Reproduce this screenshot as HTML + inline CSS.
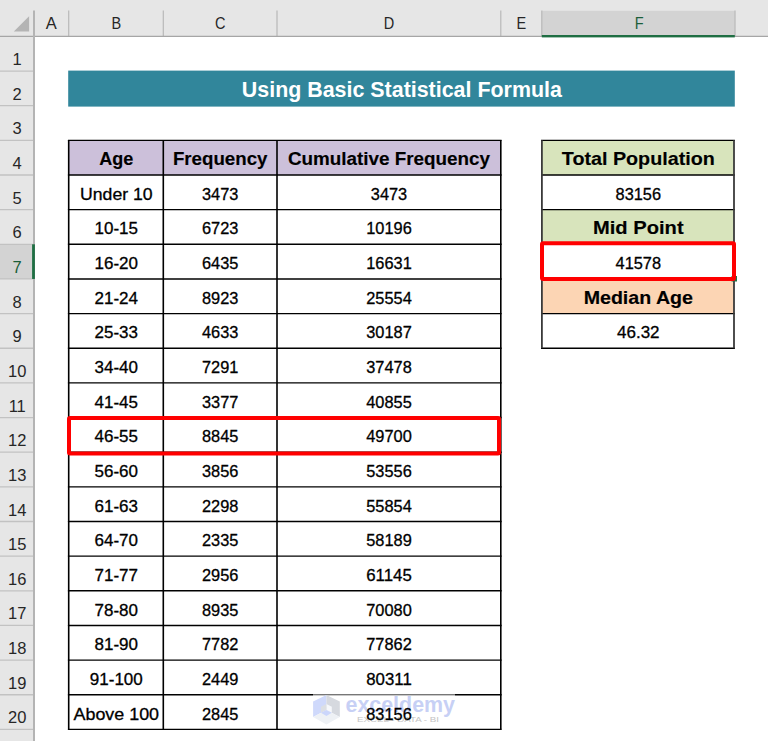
<!DOCTYPE html>
<html><head><meta charset="utf-8"><style>
html,body{margin:0;padding:0;background:#fff;width:768px;height:741px;overflow:hidden}
svg{display:block;font-family:"Liberation Sans", sans-serif}
</style></head><body>
<svg width="768" height="741" viewBox="0 0 768 741">
<rect x="0" y="0" width="768" height="741" fill="#ffffff"/>
<rect x="0" y="0" width="768" height="36.4" fill="#e6e6e6"/>
<rect x="0" y="36.4" width="34" height="704.6" fill="#e6e6e6"/>
<rect x="541.8" y="10.8" width="193.0" height="25.599999999999998" fill="#d3d3d3"/>
<rect x="0" y="244.29999999999998" width="33" height="34.65" fill="#d3d3d3"/>
<line x1="68.7" y1="10.5" x2="68.7" y2="36.4" stroke="#b8b8b8" stroke-width="1.2"/>
<line x1="163.3" y1="10.5" x2="163.3" y2="36.4" stroke="#b8b8b8" stroke-width="1.2"/>
<line x1="277.0" y1="10.5" x2="277.0" y2="36.4" stroke="#b8b8b8" stroke-width="1.2"/>
<line x1="500.8" y1="10.5" x2="500.8" y2="36.4" stroke="#b8b8b8" stroke-width="1.2"/>
<line x1="541.8" y1="10.5" x2="541.8" y2="36.4" stroke="#b8b8b8" stroke-width="1.2"/>
<line x1="735.0" y1="10.5" x2="735.0" y2="36.4" stroke="#b8b8b8" stroke-width="1.2"/>
<line x1="0" y1="71.05" x2="33" y2="71.05" stroke="#c2c2c2" stroke-width="1.3"/>
<line x1="0" y1="105.70" x2="33" y2="105.70" stroke="#c2c2c2" stroke-width="1.3"/>
<line x1="0" y1="140.35" x2="33" y2="140.35" stroke="#c2c2c2" stroke-width="1.3"/>
<line x1="0" y1="175.00" x2="33" y2="175.00" stroke="#c2c2c2" stroke-width="1.3"/>
<line x1="0" y1="209.65" x2="33" y2="209.65" stroke="#c2c2c2" stroke-width="1.3"/>
<line x1="0" y1="244.30" x2="33" y2="244.30" stroke="#c2c2c2" stroke-width="1.3"/>
<line x1="0" y1="278.95" x2="33" y2="278.95" stroke="#c2c2c2" stroke-width="1.3"/>
<line x1="0" y1="313.60" x2="33" y2="313.60" stroke="#c2c2c2" stroke-width="1.3"/>
<line x1="0" y1="348.25" x2="33" y2="348.25" stroke="#c2c2c2" stroke-width="1.3"/>
<line x1="0" y1="382.90" x2="33" y2="382.90" stroke="#c2c2c2" stroke-width="1.3"/>
<line x1="0" y1="417.55" x2="33" y2="417.55" stroke="#c2c2c2" stroke-width="1.3"/>
<line x1="0" y1="452.20" x2="33" y2="452.20" stroke="#c2c2c2" stroke-width="1.3"/>
<line x1="0" y1="486.85" x2="33" y2="486.85" stroke="#c2c2c2" stroke-width="1.3"/>
<line x1="0" y1="521.50" x2="33" y2="521.50" stroke="#c2c2c2" stroke-width="1.3"/>
<line x1="0" y1="556.15" x2="33" y2="556.15" stroke="#c2c2c2" stroke-width="1.3"/>
<line x1="0" y1="590.80" x2="33" y2="590.80" stroke="#c2c2c2" stroke-width="1.3"/>
<line x1="0" y1="625.45" x2="33" y2="625.45" stroke="#c2c2c2" stroke-width="1.3"/>
<line x1="0" y1="660.10" x2="33" y2="660.10" stroke="#c2c2c2" stroke-width="1.3"/>
<line x1="0" y1="694.75" x2="33" y2="694.75" stroke="#c2c2c2" stroke-width="1.3"/>
<line x1="0" y1="729.40" x2="33" y2="729.40" stroke="#c2c2c2" stroke-width="1.3"/>
<line x1="0" y1="36.4" x2="768" y2="36.4" stroke="#a6a6a6" stroke-width="1.4"/>
<line x1="34" y1="10.5" x2="34" y2="741" stroke="#b4b4b4" stroke-width="2"/>
<rect x="541.8" y="35" width="193.0" height="2.4" fill="#1f6e43"/>
<rect x="32.1" y="244.30" width="2.8" height="34.65" fill="#1f6e43"/>
<polygon points="13.8,31.6 29.1,16.2 29.1,31.6" fill="#b4b4b4"/>
<rect x="68.2" y="70.6" width="666.5999999999999" height="36" fill="#31869b"/>
<rect x="68.7" y="140.35" width="432.1" height="34.65" fill="#ccc0da"/>
<rect x="541.9" y="140.35" width="192.10000000000002" height="34.65" fill="#d8e4bc"/>
<rect x="541.9" y="209.65" width="192.10000000000002" height="34.65" fill="#d8e4bc"/>
<rect x="541.9" y="278.95" width="192.10000000000002" height="34.65" fill="#fcd5b4"/>
<line x1="67.9" y1="140.35" x2="501.6" y2="140.35" stroke="#000" stroke-width="1.4"/>
<line x1="67.9" y1="175.00" x2="501.6" y2="175.00" stroke="#000" stroke-width="1.4"/>
<line x1="67.9" y1="209.65" x2="501.6" y2="209.65" stroke="#000" stroke-width="1.4"/>
<line x1="67.9" y1="244.30" x2="501.6" y2="244.30" stroke="#000" stroke-width="1.4"/>
<line x1="67.9" y1="278.95" x2="501.6" y2="278.95" stroke="#000" stroke-width="1.4"/>
<line x1="67.9" y1="313.60" x2="501.6" y2="313.60" stroke="#000" stroke-width="1.4"/>
<line x1="67.9" y1="348.25" x2="501.6" y2="348.25" stroke="#000" stroke-width="1.4"/>
<line x1="67.9" y1="382.90" x2="501.6" y2="382.90" stroke="#000" stroke-width="1.4"/>
<line x1="67.9" y1="417.55" x2="501.6" y2="417.55" stroke="#000" stroke-width="1.4"/>
<line x1="67.9" y1="452.20" x2="501.6" y2="452.20" stroke="#000" stroke-width="1.4"/>
<line x1="67.9" y1="486.85" x2="501.6" y2="486.85" stroke="#000" stroke-width="1.4"/>
<line x1="67.9" y1="521.50" x2="501.6" y2="521.50" stroke="#000" stroke-width="1.4"/>
<line x1="67.9" y1="556.15" x2="501.6" y2="556.15" stroke="#000" stroke-width="1.4"/>
<line x1="67.9" y1="590.80" x2="501.6" y2="590.80" stroke="#000" stroke-width="1.4"/>
<line x1="67.9" y1="625.45" x2="501.6" y2="625.45" stroke="#000" stroke-width="1.4"/>
<line x1="67.9" y1="660.10" x2="501.6" y2="660.10" stroke="#000" stroke-width="1.4"/>
<line x1="67.9" y1="694.75" x2="501.6" y2="694.75" stroke="#000" stroke-width="1.4"/>
<line x1="67.9" y1="729.40" x2="501.6" y2="729.40" stroke="#000" stroke-width="1.4"/>
<line x1="68.7" y1="140.35" x2="68.7" y2="729.40" stroke="#000" stroke-width="1.6"/>
<line x1="163.3" y1="140.35" x2="163.3" y2="729.40" stroke="#000" stroke-width="1.6"/>
<line x1="277.0" y1="140.35" x2="277.0" y2="729.40" stroke="#000" stroke-width="1.6"/>
<line x1="500.8" y1="140.35" x2="500.8" y2="729.40" stroke="#000" stroke-width="1.6"/>
<line x1="541" y1="140.35" x2="734.9" y2="140.35" stroke="#000" stroke-width="1.4"/>
<line x1="541" y1="175.00" x2="734.9" y2="175.00" stroke="#000" stroke-width="1.4"/>
<line x1="541" y1="209.65" x2="734.9" y2="209.65" stroke="#000" stroke-width="1.4"/>
<line x1="541" y1="244.30" x2="734.9" y2="244.30" stroke="#000" stroke-width="1.4"/>
<line x1="541" y1="278.95" x2="734.9" y2="278.95" stroke="#000" stroke-width="1.4"/>
<line x1="541" y1="313.60" x2="734.9" y2="313.60" stroke="#000" stroke-width="1.4"/>
<line x1="541" y1="348.25" x2="734.9" y2="348.25" stroke="#000" stroke-width="1.4"/>
<line x1="541.9" y1="140.35" x2="541.9" y2="348.25" stroke="#3a3a3a" stroke-width="1.8"/>
<line x1="734.0" y1="140.35" x2="734.0" y2="348.25" stroke="#3a3a3a" stroke-width="1.8"/>
<rect x="69" y="418" width="430" height="35.6" fill="none" stroke="#ff0000" stroke-width="4" rx="1"/>
<rect x="731.5" y="276" width="5.5" height="5.5" fill="#217346"/>
<rect x="542" y="243.3" width="192" height="35.7" fill="none" stroke="#ff0000" stroke-width="4" rx="1"/>
<rect x="313" y="694.2" width="142" height="31.6" fill="#ffffff" fill-opacity="0.58"/>
<polygon points="326.4,694.9 313.1,701.6 313.1,717 326.4,710" fill="#cfd9fb"/>
<polygon points="326.4,694.9 339.8,701.6 339.8,717 326.4,710" fill="#d6d9df"/>
<polygon points="313.1,717 326.4,710 339.8,717 326.4,724.5" fill="#eef1f5"/>
<polygon points="326.4,704 331.8,706.7 331.8,712.7 326.4,710" fill="#f6f8fb"/>
<polygon points="326.4,704 321,706.7 321,712.7 326.4,710" fill="#dcdfe4"/>
<polygon points="321,712.7 326.4,710 331.8,712.7 326.4,716" fill="#cbd6fb"/>
<text x="345.5" y="711.9" font-size="22" font-weight="bold" fill="#c7d0f5" textLength="109.5" lengthAdjust="spacingAndGlyphs">exceldemy</text>
<text x="357" y="722" font-size="7.5" fill="#c4c4c4" textLength="82" lengthAdjust="spacingAndGlyphs">EXCEL  -  DATA  -  BI</text>
<text x="51.35" y="28.6" font-size="16.5" fill="#262626" text-anchor="middle">A</text>
<text x="116.30" y="28.6" font-size="16.5" fill="#262626" text-anchor="middle" textLength="9.7" lengthAdjust="spacingAndGlyphs">B</text>
<text x="220.20" y="28.6" font-size="16.5" fill="#262626" text-anchor="middle" textLength="10.5" lengthAdjust="spacingAndGlyphs">C</text>
<text x="389.00" y="28.6" font-size="16.5" fill="#262626" text-anchor="middle" textLength="10.5" lengthAdjust="spacingAndGlyphs">D</text>
<text x="521.30" y="28.6" font-size="16.5" fill="#262626" text-anchor="middle" textLength="9.7" lengthAdjust="spacingAndGlyphs">E</text>
<text x="639.10" y="28.6" font-size="16.5" fill="#1b5e39" text-anchor="middle" textLength="8.9" lengthAdjust="spacingAndGlyphs">F</text>
<text x="17.2" y="65.05" font-size="16.5" fill="#262626" text-anchor="middle">1</text>
<text x="17.2" y="99.70" font-size="16.5" fill="#262626" text-anchor="middle">2</text>
<text x="17.2" y="134.35" font-size="16.5" fill="#262626" text-anchor="middle">3</text>
<text x="17.2" y="169.00" font-size="16.5" fill="#262626" text-anchor="middle">4</text>
<text x="17.2" y="203.65" font-size="16.5" fill="#262626" text-anchor="middle">5</text>
<text x="17.2" y="238.30" font-size="16.5" fill="#262626" text-anchor="middle">6</text>
<text x="17.2" y="272.95" font-size="16.5" fill="#1b5e39" text-anchor="middle">7</text>
<text x="17.2" y="307.60" font-size="16.5" fill="#262626" text-anchor="middle">8</text>
<text x="17.2" y="342.25" font-size="16.5" fill="#262626" text-anchor="middle">9</text>
<text x="17.2" y="376.90" font-size="16.5" fill="#262626" text-anchor="middle">10</text>
<text x="17.2" y="411.55" font-size="16.5" fill="#262626" text-anchor="middle">11</text>
<text x="17.2" y="446.20" font-size="16.5" fill="#262626" text-anchor="middle">12</text>
<text x="17.2" y="480.85" font-size="16.5" fill="#262626" text-anchor="middle">13</text>
<text x="17.2" y="515.50" font-size="16.5" fill="#262626" text-anchor="middle">14</text>
<text x="17.2" y="550.15" font-size="16.5" fill="#262626" text-anchor="middle">15</text>
<text x="17.2" y="584.80" font-size="16.5" fill="#262626" text-anchor="middle">16</text>
<text x="17.2" y="619.45" font-size="16.5" fill="#262626" text-anchor="middle">17</text>
<text x="17.2" y="654.10" font-size="16.5" fill="#262626" text-anchor="middle">18</text>
<text x="17.2" y="688.75" font-size="16.5" fill="#262626" text-anchor="middle">19</text>
<text x="17.2" y="723.40" font-size="16.5" fill="#262626" text-anchor="middle">20</text>
<text x="401.85" y="96.6" font-size="22" font-weight="bold" fill="#ffffff" text-anchor="middle" textLength="320" lengthAdjust="spacingAndGlyphs">Using Basic Statistical Formula</text>
<text x="116.30" y="165.00" font-size="19" font-weight="bold" stroke="#000" stroke-width="0.15" fill="#000" text-anchor="middle" textLength="34" lengthAdjust="spacingAndGlyphs">Age</text>
<text x="220.20" y="165.00" font-size="19" font-weight="bold" stroke="#000" stroke-width="0.15" fill="#000" text-anchor="middle" textLength="94.5" lengthAdjust="spacingAndGlyphs">Frequency</text>
<text x="389.00" y="165.00" font-size="19" font-weight="bold" stroke="#000" stroke-width="0.15" fill="#000" text-anchor="middle" textLength="202" lengthAdjust="spacingAndGlyphs">Cumulative Frequency</text>
<text x="116.30" y="199.75" font-size="17" stroke="#000" stroke-width="0.3" fill="#000" text-anchor="middle" textLength="72.5" lengthAdjust="spacingAndGlyphs">Under 10</text>
<text x="220.20" y="199.75" font-size="17" stroke="#000" stroke-width="0.3" fill="#000" text-anchor="middle" textLength="36.4" lengthAdjust="spacingAndGlyphs">3473</text>
<text x="389.00" y="199.75" font-size="17" stroke="#000" stroke-width="0.3" fill="#000" text-anchor="middle" textLength="36.4" lengthAdjust="spacingAndGlyphs">3473</text>
<text x="116.30" y="234.40" font-size="17" stroke="#000" stroke-width="0.3" fill="#000" text-anchor="middle">10-15</text>
<text x="220.20" y="234.40" font-size="17" stroke="#000" stroke-width="0.3" fill="#000" text-anchor="middle" textLength="36.4" lengthAdjust="spacingAndGlyphs">6723</text>
<text x="389.00" y="234.40" font-size="17" stroke="#000" stroke-width="0.3" fill="#000" text-anchor="middle" textLength="45.5" lengthAdjust="spacingAndGlyphs">10196</text>
<text x="116.30" y="269.05" font-size="17" stroke="#000" stroke-width="0.3" fill="#000" text-anchor="middle">16-20</text>
<text x="220.20" y="269.05" font-size="17" stroke="#000" stroke-width="0.3" fill="#000" text-anchor="middle" textLength="36.4" lengthAdjust="spacingAndGlyphs">6435</text>
<text x="389.00" y="269.05" font-size="17" stroke="#000" stroke-width="0.3" fill="#000" text-anchor="middle" textLength="45.5" lengthAdjust="spacingAndGlyphs">16631</text>
<text x="116.30" y="303.70" font-size="17" stroke="#000" stroke-width="0.3" fill="#000" text-anchor="middle">21-24</text>
<text x="220.20" y="303.70" font-size="17" stroke="#000" stroke-width="0.3" fill="#000" text-anchor="middle" textLength="36.4" lengthAdjust="spacingAndGlyphs">8923</text>
<text x="389.00" y="303.70" font-size="17" stroke="#000" stroke-width="0.3" fill="#000" text-anchor="middle" textLength="45.5" lengthAdjust="spacingAndGlyphs">25554</text>
<text x="116.30" y="338.35" font-size="17" stroke="#000" stroke-width="0.3" fill="#000" text-anchor="middle">25-33</text>
<text x="220.20" y="338.35" font-size="17" stroke="#000" stroke-width="0.3" fill="#000" text-anchor="middle" textLength="36.4" lengthAdjust="spacingAndGlyphs">4633</text>
<text x="389.00" y="338.35" font-size="17" stroke="#000" stroke-width="0.3" fill="#000" text-anchor="middle" textLength="45.5" lengthAdjust="spacingAndGlyphs">30187</text>
<text x="116.30" y="373.00" font-size="17" stroke="#000" stroke-width="0.3" fill="#000" text-anchor="middle">34-40</text>
<text x="220.20" y="373.00" font-size="17" stroke="#000" stroke-width="0.3" fill="#000" text-anchor="middle" textLength="36.4" lengthAdjust="spacingAndGlyphs">7291</text>
<text x="389.00" y="373.00" font-size="17" stroke="#000" stroke-width="0.3" fill="#000" text-anchor="middle" textLength="45.5" lengthAdjust="spacingAndGlyphs">37478</text>
<text x="116.30" y="407.65" font-size="17" stroke="#000" stroke-width="0.3" fill="#000" text-anchor="middle">41-45</text>
<text x="220.20" y="407.65" font-size="17" stroke="#000" stroke-width="0.3" fill="#000" text-anchor="middle" textLength="36.4" lengthAdjust="spacingAndGlyphs">3377</text>
<text x="389.00" y="407.65" font-size="17" stroke="#000" stroke-width="0.3" fill="#000" text-anchor="middle" textLength="45.5" lengthAdjust="spacingAndGlyphs">40855</text>
<text x="116.30" y="442.30" font-size="17" stroke="#000" stroke-width="0.3" fill="#000" text-anchor="middle">46-55</text>
<text x="220.20" y="442.30" font-size="17" stroke="#000" stroke-width="0.3" fill="#000" text-anchor="middle" textLength="36.4" lengthAdjust="spacingAndGlyphs">8845</text>
<text x="389.00" y="442.30" font-size="17" stroke="#000" stroke-width="0.3" fill="#000" text-anchor="middle" textLength="45.5" lengthAdjust="spacingAndGlyphs">49700</text>
<text x="116.30" y="476.95" font-size="17" stroke="#000" stroke-width="0.3" fill="#000" text-anchor="middle">56-60</text>
<text x="220.20" y="476.95" font-size="17" stroke="#000" stroke-width="0.3" fill="#000" text-anchor="middle" textLength="36.4" lengthAdjust="spacingAndGlyphs">3856</text>
<text x="389.00" y="476.95" font-size="17" stroke="#000" stroke-width="0.3" fill="#000" text-anchor="middle" textLength="45.5" lengthAdjust="spacingAndGlyphs">53556</text>
<text x="116.30" y="511.60" font-size="17" stroke="#000" stroke-width="0.3" fill="#000" text-anchor="middle">61-63</text>
<text x="220.20" y="511.60" font-size="17" stroke="#000" stroke-width="0.3" fill="#000" text-anchor="middle" textLength="36.4" lengthAdjust="spacingAndGlyphs">2298</text>
<text x="389.00" y="511.60" font-size="17" stroke="#000" stroke-width="0.3" fill="#000" text-anchor="middle" textLength="45.5" lengthAdjust="spacingAndGlyphs">55854</text>
<text x="116.30" y="546.25" font-size="17" stroke="#000" stroke-width="0.3" fill="#000" text-anchor="middle">64-70</text>
<text x="220.20" y="546.25" font-size="17" stroke="#000" stroke-width="0.3" fill="#000" text-anchor="middle" textLength="36.4" lengthAdjust="spacingAndGlyphs">2335</text>
<text x="389.00" y="546.25" font-size="17" stroke="#000" stroke-width="0.3" fill="#000" text-anchor="middle" textLength="45.5" lengthAdjust="spacingAndGlyphs">58189</text>
<text x="116.30" y="580.90" font-size="17" stroke="#000" stroke-width="0.3" fill="#000" text-anchor="middle">71-77</text>
<text x="220.20" y="580.90" font-size="17" stroke="#000" stroke-width="0.3" fill="#000" text-anchor="middle" textLength="36.4" lengthAdjust="spacingAndGlyphs">2956</text>
<text x="389.00" y="580.90" font-size="17" stroke="#000" stroke-width="0.3" fill="#000" text-anchor="middle" textLength="45.5" lengthAdjust="spacingAndGlyphs">61145</text>
<text x="116.30" y="615.55" font-size="17" stroke="#000" stroke-width="0.3" fill="#000" text-anchor="middle">78-80</text>
<text x="220.20" y="615.55" font-size="17" stroke="#000" stroke-width="0.3" fill="#000" text-anchor="middle" textLength="36.4" lengthAdjust="spacingAndGlyphs">8935</text>
<text x="389.00" y="615.55" font-size="17" stroke="#000" stroke-width="0.3" fill="#000" text-anchor="middle" textLength="45.5" lengthAdjust="spacingAndGlyphs">70080</text>
<text x="116.30" y="650.20" font-size="17" stroke="#000" stroke-width="0.3" fill="#000" text-anchor="middle">81-90</text>
<text x="220.20" y="650.20" font-size="17" stroke="#000" stroke-width="0.3" fill="#000" text-anchor="middle" textLength="36.4" lengthAdjust="spacingAndGlyphs">7782</text>
<text x="389.00" y="650.20" font-size="17" stroke="#000" stroke-width="0.3" fill="#000" text-anchor="middle" textLength="45.5" lengthAdjust="spacingAndGlyphs">77862</text>
<text x="116.30" y="684.85" font-size="17" stroke="#000" stroke-width="0.3" fill="#000" text-anchor="middle">91-100</text>
<text x="220.20" y="684.85" font-size="17" stroke="#000" stroke-width="0.3" fill="#000" text-anchor="middle" textLength="36.4" lengthAdjust="spacingAndGlyphs">2449</text>
<text x="389.00" y="684.85" font-size="17" stroke="#000" stroke-width="0.3" fill="#000" text-anchor="middle" textLength="45.5" lengthAdjust="spacingAndGlyphs">80311</text>
<text x="116.30" y="719.50" font-size="17" stroke="#000" stroke-width="0.3" fill="#000" text-anchor="middle" textLength="85.5" lengthAdjust="spacingAndGlyphs">Above 100</text>
<text x="220.20" y="719.50" font-size="17" stroke="#000" stroke-width="0.3" fill="#000" text-anchor="middle" textLength="36.4" lengthAdjust="spacingAndGlyphs">2845</text>
<text x="389.00" y="719.50" font-size="17" stroke="#000" stroke-width="0.3" fill="#000" text-anchor="middle" textLength="45.5" lengthAdjust="spacingAndGlyphs">83156</text>
<text x="638.30" y="165.00" font-size="19" font-weight="bold" stroke="#000" stroke-width="0.15" fill="#000" text-anchor="middle" textLength="153" lengthAdjust="spacingAndGlyphs">Total Population</text>
<text x="638.30" y="199.75" font-size="17" stroke="#000" stroke-width="0.3" fill="#000" text-anchor="middle" textLength="45.5" lengthAdjust="spacingAndGlyphs">83156</text>
<text x="638.30" y="234.30" font-size="19" font-weight="bold" stroke="#000" stroke-width="0.15" fill="#000" text-anchor="middle" textLength="90.6" lengthAdjust="spacingAndGlyphs">Mid Point</text>
<text x="638.30" y="269.05" font-size="17" stroke="#000" stroke-width="0.3" fill="#000" text-anchor="middle" textLength="45.5" lengthAdjust="spacingAndGlyphs">41578</text>
<text x="638.30" y="303.60" font-size="19" font-weight="bold" stroke="#000" stroke-width="0.15" fill="#000" text-anchor="middle" textLength="109.3" lengthAdjust="spacingAndGlyphs">Median Age</text>
<text x="638.30" y="338.35" font-size="17" stroke="#000" stroke-width="0.3" fill="#000" text-anchor="middle">46.32</text>
</svg>
</body></html>
